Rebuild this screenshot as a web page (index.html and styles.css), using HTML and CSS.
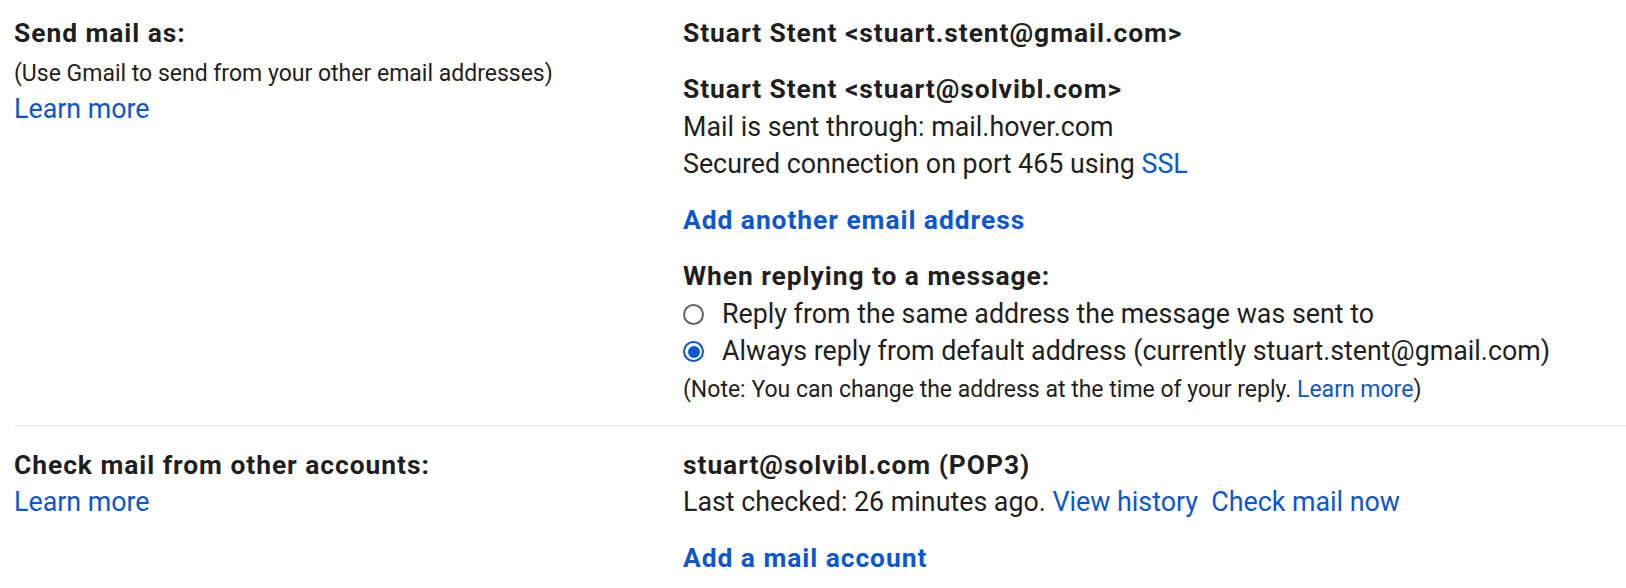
FILE: index.html
```html
<!DOCTYPE html>
<html lang="en">
<head>
<meta charset="utf-8">
<title>Accounts settings</title>
<link rel="stylesheet" href="styles.css">
</head>
<body>
<div class="settings">
  <section class="row row-first">
    <div class="label-col">
      <div class="label">Send mail as:</div>
      <div class="sub">(Use Gmail to send from your other email addresses)</div>
      <a class="link learn" href="#">Learn more</a>
    </div>
    <div class="value-col">
      <div class="block">
        <div class="addr">Stuart Stent &lt;stuart.stent@gmail.com&gt;</div>
      </div>
      <div class="block">
        <div class="addr">Stuart Stent &lt;stuart@solvibl.com&gt;</div>
        <div class="line">Mail is sent through: mail.hover.com</div>
        <div class="line">Secured connection on port 465 using <a class="link" href="#">SSL</a></div>
      </div>
      <div class="block">
        <a class="action" href="#">Add another email address</a>
      </div>
      <div class="block">
        <div class="addr">When replying to a message:</div>
        <label class="radio-row"><span class="radio"></span><span>Reply from the same address the message was sent to</span></label>
        <label class="radio-row"><span class="radio checked"></span><span>Always reply from default address (currently stuart.stent@gmail.com)</span></label>
        <div class="note">(Note: You can change the address at the time of your reply. <a class="link" href="#">Learn more</a>)</div>
      </div>
    </div>
  </section>
  <section class="row row-second">
    <div class="label-col">
      <div class="label">Check mail from other accounts:</div>
      <a class="link learn learn-2" href="#">Learn more</a>
    </div>
    <div class="value-col">
      <div class="block">
        <div class="addr">stuart@solvibl.com (POP3)</div>
        <div class="line">Last checked: 26 minutes ago. <a class="link" href="#">View history</a>&nbsp; <a class="link" href="#">Check mail now</a></div>
      </div>
      <div class="block">
        <a class="action" href="#">Add a mail account</a>
      </div>
    </div>
  </section>
</div>
</body>
</html>
```

FILE: styles.css
```css
html, body {
  margin: 0;
  padding: 0;
  background: #ffffff;
}

body {
  font-family: Roboto, "Noto Sans", "Liberation Sans", sans-serif;
  color: #1f1f1f;
  font-size: 26.8px;
}

.settings {
  padding-left: 14px;
}

.row {
  display: grid;
  grid-template-columns: 669px 1fr;
}

.row-first {
  padding-top: 15px;
  padding-bottom: 20px;
  border-bottom: 1px solid #e3e3e3;
}

.row-second {
  padding-top: 21px;
}

.label-col {
  display: flex;
  flex-direction: column;
  align-items: flex-start;
}

.label,
.addr,
.action {
  font-size: 26.4px;
  font-weight: 700;
  letter-spacing: 0.95px;
  line-height: 37.5px;
}

.sub {
  font-size: 23px;
  line-height: 30px;
  margin-top: 6px;
}

.learn {
  line-height: 37.5px;
  margin-top: 2px;
}

.learn-2 {
  margin-top: 0;
}

.link {
  color: #0b57d0;
  text-decoration: none;
}

.value-col {
  display: flex;
  flex-direction: column;
  gap: 18.5px;
}

.block {
  display: flex;
  flex-direction: column;
  align-items: flex-start;
}

.line {
  line-height: 37.5px;
}

.action {
  color: #0b57d0;
  text-decoration: none;
}

.radio-row {
  display: flex;
  align-items: center;
  gap: 18px;
  line-height: 37.5px;
}

.radio {
  width: 17px;
  height: 17px;
  border: 2.5px solid #5f6368;
  border-radius: 50%;
  box-sizing: content-box;
  position: relative;
  flex: none;
}

.radio.checked {
  border-color: #0b57d0;
}

.radio.checked::after {
  content: "";
  position: absolute;
  left: 2.5px;
  top: 2.5px;
  width: 12px;
  height: 12px;
  border-radius: 50%;
  background: #0b57d0;
}

.note {
  font-size: 23px;
  line-height: 30px;
  margin-top: 4px;
}
```
